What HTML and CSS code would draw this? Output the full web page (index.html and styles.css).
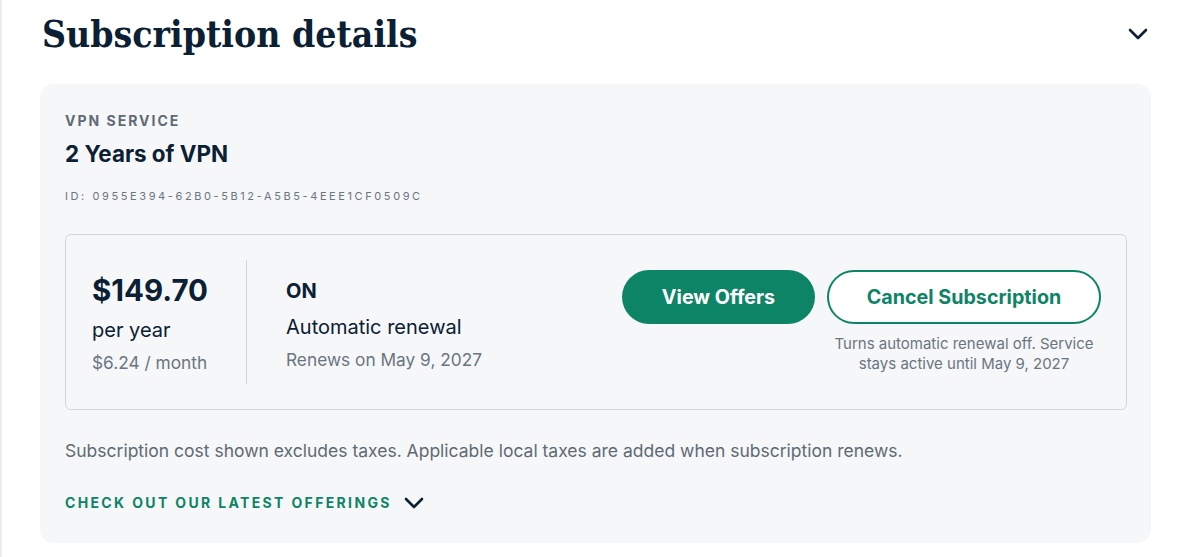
FILE: index.html
```html
<!DOCTYPE html>
<html lang="en">
<head>
<meta charset="utf-8">
<title>Subscription details</title>
<link rel="stylesheet" href="styles.css">
</head>
<body>
<div class="page">
  <header class="head">
    <h1 class="title">Subscription details</h1>
    <button class="collapse" aria-label="Collapse">
      <svg width="20" height="12" viewBox="0 0 20 12"><path d="M2 2 L10 10 L18 2" fill="none" stroke="#0b2033" stroke-width="2.6" stroke-linecap="round" stroke-linejoin="round"/></svg>
    </button>
  </header>
  <section class="card">
    <div class="eyebrow">VPN SERVICE</div>
    <div class="plan">2 Years of VPN</div>
    <div class="sid">ID: 0955E394-62B0-5B12-A5B5-4EEE1CF0509C</div>
    <div class="box">
      <div class="price">
        <div class="amount">$149.70</div>
        <div class="period">per year</div>
        <div class="monthly">$6.24 / month</div>
      </div>
      <div class="renewal">
        <div class="state">ON</div>
        <div class="auto">Automatic renewal</div>
        <div class="renews">Renews on May 9, 2027</div>
      </div>
      <div class="actions">
        <button class="btn primary">View Offers</button>
        <div class="cancel-wrap">
          <button class="btn outline">Cancel Subscription</button>
          <p class="note">Turns automatic renewal off. Service stays active until May 9, 2027</p>
        </div>
      </div>
    </div>
    <p class="tax">Subscription cost shown excludes taxes. Applicable local taxes are added when subscription renews.</p>
    <a class="offers" href="#">CHECK OUT OUR LATEST OFFERINGS
      <svg width="20" height="12" viewBox="0 0 20 12"><path d="M2 2 L10 10 L18 2" fill="none" stroke="#0b2033" stroke-width="2.6" stroke-linecap="round" stroke-linejoin="round"/></svg>
    </a>
  </section>
</div>
</body>
</html>
```

FILE: styles.css
```css
* { box-sizing: border-box; }
html, body { margin: 0; padding: 0; background: #ffffff; }
body {
  font-family: Inter, "Noto Sans", "Liberation Sans", sans-serif;
  color: #0b2033;
}
.page {
  border-left: 2px solid #ebebeb;
  min-height: 557px;
  padding: 0 35px 0 38px;
  width: 1186px;
}
.head {
  display: flex;
  align-items: center;
  justify-content: space-between;
  height: 84px;
  padding-bottom: 16px;
}
.title {
  margin: 0;
  font-family: "DejaVu Serif", "Liberation Serif", serif;
  font-stretch: condensed;
  font-weight: 600;
  font-size: 37px;
  color: #0b2033;
  padding-left: 2px;
}
.collapse {
  background: none;
  border: 0;
  padding: 0;
  margin-right: 3px;
  display: flex;
}
.card {
  width: 1111px;
  background: #f5f7f9;
  border-radius: 14px;
  padding: 29px 24px 31px 25px;
}
.eyebrow {
  font-size: 14px;
  font-weight: 700;
  letter-spacing: 2px;
  color: #5f6a74;
  line-height: 16px;
}
.plan {
  margin-top: 12px;
  font-size: 22.4px;
  font-weight: 700;
  line-height: 26px;
}
.sid {
  margin-top: 22px;
  font-size: 11px;
  letter-spacing: 2.6px;
  color: #6b7580;
  line-height: 14px;
}
.box {
  margin-top: 31px;
  border: 1px solid #d3d7dc;
  border-radius: 6px;
  height: 176px;
  display: flex;
  align-items: center;
  padding: 0 25px 0 26px;
}
.price {
  width: 155px;
  align-self: stretch;
  margin: 25px 0;
  border-right: 1px solid #d3d7dc;
  padding-top: 12px;
}
.amount { font-size: 29.5px; font-weight: 700; line-height: 36px; }
.period { font-size: 20px; line-height: 26px; margin-top: 9px; }
.monthly { font-size: 17.3px; color: #6b7580; line-height: 24px; margin-top: 8px; }
.renewal {
  align-self: stretch;
  padding: 44px 0 0 39px;
  flex: 1;
}
.state { font-size: 20px; font-weight: 700; line-height: 24px; }
.auto { font-size: 20px; line-height: 24px; margin-top: 12px; }
.renews { font-size: 17.3px; color: #6b7580; line-height: 24px; margin-top: 9px; }
.actions {
  display: flex;
  gap: 12px;
  align-self: flex-start;
  margin-top: 35px;
}
.btn {
  height: 54px;
  border-radius: 27px;
  font-family: Inter, "Noto Sans", sans-serif;
  font-size: 19.7px;
  font-weight: 700;
  cursor: pointer;
}
.primary {
  width: 193px;
  background: #0e8466;
  color: #ffffff;
  border: 0;
}
.outline {
  width: 274px;
  background: #ffffff;
  color: #0e8466;
  border: 2px solid #0e8466;
}
.cancel-wrap { display: flex; flex-direction: column; align-items: center; }
.note {
  margin: 10px 0 0;
  width: 274px;
  text-align: center;
  font-size: 15px;
  line-height: 20px;
  color: #6b7580;
}
.tax {
  margin: 29px 0 0;
  font-size: 17.5px;
  line-height: 24px;
  color: #5f6a74;
}
.offers {
  display: inline-flex;
  align-items: center;
  gap: 12px;
  margin-top: 31px;
  font-size: 14px;
  font-weight: 700;
  letter-spacing: 2.35px;
  color: #0e8466;
  text-decoration: none;
  line-height: 18px;
}
```
